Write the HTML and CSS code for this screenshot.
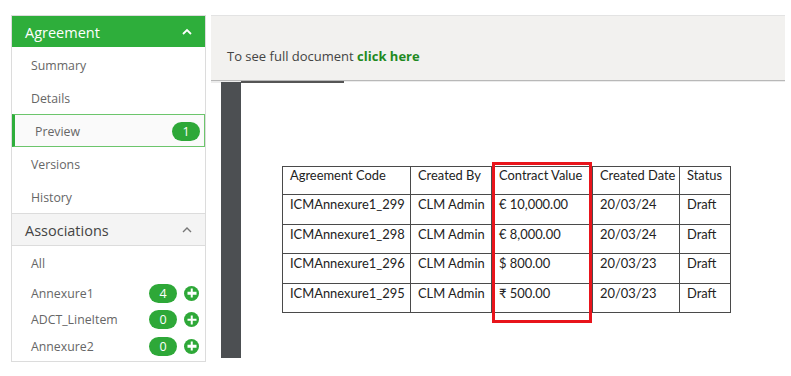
FILE: index.html
```
<!DOCTYPE html>
<html>
<head>
<meta charset="utf-8">
<link rel="stylesheet" href="styles.css">
</head>
<body>
<div class="app">
  <aside class="sidebar">
    <div class="sec-head green">
      <span>Agreement</span>
      <svg class="chev" width="12" height="8" viewBox="0 0 12 8"><path d="M2 6 L6 2 L10 6" fill="none" stroke="currentColor" stroke-width="1.8"/></svg>
    </div>
    <div class="item">Summary</div>
    <div class="item">Details</div>
    <div class="item active"><span>Preview</span><span class="pill">1</span></div>
    <div class="item">Versions</div>
    <div class="item">History</div>
    <div class="sec-head gray">
      <span>Associations</span>
      <svg class="chev" width="12" height="8" viewBox="0 0 12 8"><path d="M2 6 L6 2 L10 6" fill="none" stroke="currentColor" stroke-width="1.4"/></svg>
    </div>
    <div class="assoc first">All</div>
    <div class="assoc"><span class="name">Annexure1</span><span class="pill">4</span><span class="plus"></span></div>
    <div class="assoc"><span class="name">ADCT_LineItem</span><span class="pill">0</span><span class="plus"></span></div>
    <div class="assoc"><span class="name">Annexure2</span><span class="pill">0</span><span class="plus"></span></div>
  </aside>
  <main class="main">
    <div class="toolbar">To see full document <a class="link">click here</a></div>
    <div class="viewer">
      <div class="gutter"></div>
      <div class="page">
        <div class="topline"></div>
        <div class="table-wrap">
          <table class="doc">
            <colgroup><col class="c1"><col class="c2"><col class="c3"><col class="c4"><col class="c5"></colgroup>
            <tr class="hdr"><td>Agreement Code</td><td>Created By</td><td>Contract Value</td><td>Created Date</td><td>Status</td></tr>
            <tr><td>ICMAnnexure1_299</td><td>CLM Admin</td><td>€ 10,000.00</td><td>20/03/24</td><td>Draft</td></tr>
            <tr><td>ICMAnnexure1_298</td><td>CLM Admin</td><td>€ 8,000.00</td><td>20/03/24</td><td>Draft</td></tr>
            <tr><td>ICMAnnexure1_296</td><td>CLM Admin</td><td>$ 800.00</td><td>20/03/23</td><td>Draft</td></tr>
            <tr><td>ICMAnnexure1_295</td><td>CLM Admin</td><td>₹ 500.00</td><td>20/03/23</td><td>Draft</td></tr>
          </table>
          <div class="highlight"></div>
        </div>
      </div>
    </div>
  </main>
</div>
</body>
</html>
```
FILE: styles.css
```
* { box-sizing: border-box; }
body { margin: 0; background: #fff; font-family: "Open Sans", "Noto Sans", sans-serif; }
.app { display: flex; padding: 15px 0 0 11px; gap: 5px; height: 376px; }
.sidebar { width: 195px; height: 347px; border: 1px solid #dcdcdc; display: flex; flex-direction: column; overflow: hidden; }
.sec-head { height: 31px; display: flex; align-items: center; justify-content: space-between; padding: 0 12px 0 13px; font-size: 14.5px; }
.sec-head.green { background: #2eae3b; color: #fff; padding-top: 1px; margin-bottom: 1px; }
.sec-head.gray { background: #f4f4f4; color: #444; border-top: 1px solid #dcdcdc; border-bottom: 1px solid #dcdcdc; height: 33px; padding-top: 1px; }
.sec-head.gray .chev { color: #777; }
.item { height: 33px; display: flex; align-items: center; padding-left: 19px; padding-top: 2px; font-size: 12.3px; color: #666; }
.item.active { border: 1px solid #6cc56c; border-left: 3px solid #2eae3b; padding-left: 20px; padding-right: 4px; padding-top: 1px; justify-content: space-between; background: #fafafa; }
.pill { background: #2ea838; color: #fff; border-radius: 10px; width: 28px; height: 19px; display: inline-flex; align-items: center; justify-content: center; font-size: 12.5px; }
.assoc { height: 26.5px; display: flex; align-items: center; padding-left: 19px; padding-right: 6px; font-size: 12.3px; color: #666; }
.assoc.first { height: 34px; padding-top: 1px; }
.assoc .name { flex: 1; }
.plus { width: 15px; height: 15px; border-radius: 50%; background: #2ea838; margin-left: 7px; position: relative; }
.plus::before, .plus::after { content: ""; position: absolute; background: #fff; left: 50%; top: 50%; transform: translate(-50%, -50%); }
.plus::before { width: 9px; height: 2.5px; }
.plus::after { width: 2.5px; height: 9px; }
.main { width: 574px; display: flex; flex-direction: column; }
.toolbar { height: 66px; background: #f2f1ef; border-top: 1px solid #e3e3e3; border-bottom: 1px solid #b8b8b8; box-shadow: 0 2px 0 #ececec; padding: 31px 0 0 16px; font-size: 13px; color: #444; }
.link { color: #1f8a1f; font-weight: 700; }
.viewer { display: flex; padding-left: 10px; height: 276px; margin-top: 1px; }
.gutter { width: 20px; background: #4c4f52; }
.page { flex: 1; background: #fff; position: relative; padding: 84px 0 0 41px; }
.topline { position: absolute; left: 0; top: -1px; width: 103px; height: 2px; background: #555; }
.table-wrap { position: relative; width: 448px; }
.doc { border-collapse: collapse; table-layout: fixed; width: 448px; font-family: Lato, "Open Sans", sans-serif; font-size: 12.9px; color: #222; }
.doc td { border: 1px solid #4a4a4a; height: 29.5px; padding: 1px 0 0 7px; vertical-align: top; white-space: nowrap; }
.doc .hdr td { height: 28px; padding-top: 0; }
.c1 { width: 128px; } .c2 { width: 81px; } .c3 { width: 101px; } .c4 { width: 87px; } .c5 { width: 51px; }
.highlight { position: absolute; left: 210px; top: -4px; width: 100px; height: 161px; border: 3px solid #e8141b; }
```
